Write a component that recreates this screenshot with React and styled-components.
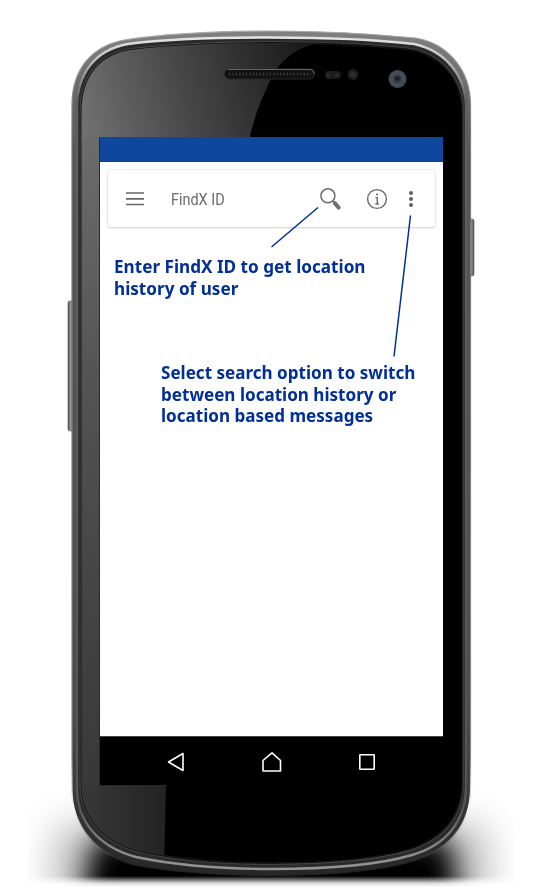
import React from 'react';
import styled, { createGlobalStyle } from 'styled-components';

const GlobalStyle = createGlobalStyle`
  * { box-sizing: border-box; }
  body { margin: 0; background: #fff; overflow: hidden; }
`;

const Page = styled.main`
  position: relative;
  width: 540px;
  height: 890px;
  padding: 137px 97px 0 100px;
  background: #fff;
  overflow: hidden;
`;

const DeviceArt = styled.svg`
  position: absolute;
  inset: 0;
  width: 540px;
  height: 890px;
`;

const Screen = styled.section`
  position: relative;
  display: flex;
  flex-direction: column;
  width: 343px;
  height: 648px;
  background: #fff;
`;

const StatusBar = styled.div`
  flex: none;
  height: 25px;
  background: #0f479f;
  border-bottom: 1px solid #0b3e96;
`;

const Content = styled.div`
  flex: 1;
  padding: 8px 8px 0;
`;

const SearchCard = styled.header`
  display: flex;
  align-items: center;
  height: 57px;
  padding: 0 22px 0 18px;
  background: #fff;
  border-radius: 2px;
  box-shadow: 0 0 2px rgba(0, 0, 0, 0.18), 0 1px 2px rgba(0, 0, 0, 0.15);
`;

const SearchLabel = styled.span`
  flex: 1;
  margin: 2px 0 0 27px;
  font: 400 16.5px/20px Roboto, sans-serif;
  color: #6a6a6a;
  white-space: nowrap;
  transform: scaleX(${(p) => p.$stretch});
  transform-origin: left;
`;

const Icon = styled.svg`
  flex: none;
  display: block;
  width: ${(p) => p.$w}px;
  height: ${(p) => p.$h}px;
  margin-left: ${(p) => p.$gap || 0}px;
  overflow: visible;
`;

const Note = styled.p`
  width: max-content;
  margin: ${(p) => p.$top}px 0 0 ${(p) => p.$left}px;
  font: 700 18px/21.5px 'Noto Sans', sans-serif;
  color: #002f98;
  white-space: pre-line;
  transform: scaleX(${(p) => p.$stretch});
  transform-origin: left;
`;

const Leaders = styled.svg`
  position: absolute;
  inset: 0;
  width: 343px;
  height: 648px;
  pointer-events: none;
`;

const NavBar = styled.nav`
  flex: none;
  display: flex;
  justify-content: space-between;
  align-items: center;
  height: 49px;
  padding: 2px 68px 0 67px;
  background: #000;
  border-top: 1px solid #444;
`;

const outer =
  'M72 105 C72 70 91 45 127 39.5 C172 33 225 31 271 31 C325 31 370 33.5 416 38 C450 44 470.5 72 470.5 105 V790 C470 825 449 849 414 861 C380 871 325 875.5 271 875.5 C217 875.5 172 872 134 865 C95 854 72 825 72 790 Z';
const middle =
  'M77 108 C77 75 94 50 128 44 C174 38 225 37.5 271 37.5 C325 37.5 370 39 414 44 C446 51 466 76 466 108 V788 C465 822 446 845 412 855 C378 865 325 869 271 869 C217 869 174 865 136 857 C99 847 77 822 77 788 Z';
const glass =
  'M81.5 112 C81.5 80 96 56 130 50 C176 44.5 225 43 271 43 C325 43 370 45 412 50 C443 57 462 81 462 112 V785 C461 817 443 838 410 849 C376 859 325 863 271 863 C217 863 176 859 139 851 C103 842 81.5 817 81.5 785 Z';

function Device() {
  return (
    <DeviceArt viewBox="0 0 540 890" aria-hidden="true">
      <defs>
        <linearGradient id="rim" x1="0" y1="31" x2="0" y2="876" gradientUnits="userSpaceOnUse">
          <stop offset="0" stopColor="#808080" />
          <stop offset=".08" stopColor="#666" />
          <stop offset=".15" stopColor="#565656" />
          <stop offset=".8" stopColor="#4c4c4c" />
          <stop offset="1" stopColor="#262626" />
        </linearGradient>
        <linearGradient id="shine" x1="0" y1="31" x2="0" y2="876" gradientUnits="userSpaceOnUse">
          <stop offset="0" stopColor="#f0f0f0" />
          <stop offset=".03" stopColor="#c4c4c4" />
          <stop offset=".08" stopColor="#606060" />
          <stop offset=".92" stopColor="#555" />
          <stop offset=".97" stopColor="#8a8a8a" />
          <stop offset="1" stopColor="#999" />
        </linearGradient>
        <linearGradient id="edge" x1="0" y1="31" x2="0" y2="876" gradientUnits="userSpaceOnUse">
          <stop offset="0" stopColor="#aaa" />
          <stop offset=".12" stopColor="#777" />
          <stop offset=".86" stopColor="#888" />
          <stop offset=".92" stopColor="#fff" />
          <stop offset=".955" stopColor="#888" />
          <stop offset=".98" stopColor="#222" />
        </linearGradient>
        <linearGradient id="glassTone" x1="80" y1="110" x2="300" y2="55" gradientUnits="userSpaceOnUse">
          <stop offset="0" stopColor="#707070" />
          <stop offset=".5" stopColor="#444" />
          <stop offset="1" stopColor="#1c1c1c" />
        </linearGradient>
        <linearGradient id="sideTone" x1="0" y1="137" x2="0" y2="787" gradientUnits="userSpaceOnUse">
          <stop offset="0" stopColor="#6c6c6c" />
          <stop offset=".4" stopColor="#525252" />
          <stop offset="1" stopColor="#383838" />
        </linearGradient>
        <linearGradient id="footTone" x1="82" y1="0" x2="166" y2="0" gradientUnits="userSpaceOnUse">
          <stop offset="0" stopColor="#383838" />
          <stop offset="1" stopColor="#232323" />
        </linearGradient>
        <linearGradient id="keyTone" x1="0" y1="0" x2="1" y2="0">
          <stop offset="0" stopColor="#444" />
          <stop offset=".4" stopColor="#999" />
          <stop offset="1" stopColor="#555" />
        </linearGradient>
        <filter id="blurShadow" x="-30%" y="-80%" width="160%" height="260%">
          <feGaussianBlur stdDeviation="13" />
        </filter>
        <filter id="blurHaze" x="-30%" y="-80%" width="160%" height="260%">
          <feGaussianBlur stdDeviation="20" />
        </filter>
        <filter id="soft">
          <feGaussianBlur stdDeviation=".6" />
        </filter>
        <linearGradient id="floorFade" x1="0" y1="876" x2="0" y2="887" gradientUnits="userSpaceOnUse">
          <stop offset="0" stopColor="#fff" stopOpacity="0" />
          <stop offset=".65" stopColor="#fff" stopOpacity=".85" />
          <stop offset="1" stopColor="#fff" />
        </linearGradient>
        <clipPath id="floor"><rect x="28" y="770" width="486" height="120" /></clipPath>
        <clipPath id="glassClip"><path d={glass} /></clipPath>
      </defs>

      <g clipPath="url(#floor)">
        <rect x="58" y="828" width="426" height="80" fill="#000" opacity=".32" filter="url(#blurHaze)" />
        <path d="M95 840 L448 840 L462 920 H80 Z" fill="#000" filter="url(#blurShadow)" />
        <rect x="0" y="875" width="540" height="15" fill="url(#floorFade)" />
      </g>

      <rect x="68" y="301" width="6" height="130" rx="2" fill="url(#keyTone)" stroke="#555" strokeWidth=".6" />
      <rect x="468.5" y="219" width="5.5" height="57" rx="2" fill="url(#keyTone)" stroke="#555" strokeWidth=".6" />

      <path d={outer} fill="url(#rim)" stroke="url(#edge)" strokeWidth="1.2" />
      <path d={middle} fill="#292929" stroke="url(#shine)" strokeWidth="2.4" filter="url(#soft)" />
      <path d={glass} fill="#000" stroke="#4a4a4a" strokeWidth="3.5" />
      <path d={glass} fill="#000" stroke="#111" strokeWidth="1.8" />
      <g clipPath="url(#glassClip)">
        <path d="M80 40 H330 C294 46 277 62 267 88 C259 104 253 122 249 140 H80 Z" fill="url(#glassTone)" />
        <rect x="80" y="137" width="20" height="650" fill="url(#sideTone)" />
        <path d="M80 785 H166 L164 870 H80 Z" fill="url(#footTone)" />
        <path d="M99.5 137 V785.5 H166" fill="none" stroke="#292929" />
      </g>

      <rect x="224.5" y="69" width="90" height="10" rx="5" fill="#111" stroke="#292929" />
      <path d="M228 69.5 H311 Q314 70 314 74" fill="none" stroke="#666" strokeWidth="1" />
      <path d="M229 74 H311" stroke="#3a3a3a" strokeWidth="3" strokeDasharray="1.2 2.2" />
      <rect x="325" y="71" width="16" height="8" rx="4" fill="#1c1c1c" />
      <circle cx="328.5" cy="75" r="2.2" fill="#282828" />
      <circle cx="337" cy="75" r="2.2" fill="#282828" />
      <circle cx="353" cy="74.5" r="5.4" fill="#1e1e1e" />
      <circle cx="353" cy="74.5" r="2.5" fill="#2d2d2d" />
      <g filter="url(#soft)">
        <circle cx="397.5" cy="79" r="9" fill="#454b57" />
        <circle cx="397.5" cy="79" r="5.2" fill="#363b46" stroke="#505764" strokeWidth="1" />
        <circle cx="397.5" cy="78.5" r="2.5" fill="#20242c" />
      </g>
    </DeviceArt>
  );
}

export default function App() {
  return (
    <>
      <GlobalStyle />
      <Page>
        <Device />
        <Screen>
          <StatusBar />
          <Content>
            <SearchCard>
              <Icon $w={18} $h={14} viewBox="0 0 18 14">
                <path d="M0 1 H18 M0 6.8 H18 M0 12.5 H18" stroke="#666" strokeWidth="1.7" />
              </Icon>
              <SearchLabel $stretch={0.875}>FindX ID</SearchLabel>
              <Icon $w={22} $h={22} viewBox="0 0 22 22">
                <circle cx="7.9" cy="7.8" r="7" fill="none" stroke="#6a6a6a" strokeWidth="1.5" />
                <path d="M12.7 12.8 L15 15.3" stroke="#6a6a6a" strokeWidth="1.6" />
                <path d="M14.8 15.2 L18.7 19.6" stroke="#707070" strokeWidth="4" strokeLinecap="round" />
              </Icon>
              <Icon $w={20} $h={20} $gap={25} viewBox="0 0 20 20">
                <circle cx="10" cy="10" r="9.4" fill="none" stroke="#6a6a6a" strokeWidth="1.4" />
                <circle cx="10" cy="5.5" r="1.1" fill="#6a6a6a" />
                <path d="M8.5 8.6 H10.3 V15 M8.4 15 H11.8" fill="none" stroke="#6a6a6a" strokeWidth="1.4" />
              </Icon>
              <Icon $w={4} $h={16} $gap={22} viewBox="0 0 4 16">
                <g fill="#616161">
                  <circle cx="2" cy="2" r="2" />
                  <circle cx="2" cy="8" r="2" />
                  <circle cx="2" cy="14" r="2" />
                </g>
              </Icon>
            </SearchCard>
            <Note $top={29} $left={6} $stretch={0.952}>
              {'Enter FindX ID to get location\nhistory of user'}
            </Note>
            <Note $top={63} $left={53} $stretch={0.948}>
              {'Select search option to switch\nbetween location history or\nlocation based messages'}
            </Note>
          </Content>
          <NavBar>
            <Icon $w={18} $h={20} viewBox="0 0 18 20">
              <path d="M16 1.5 V18.5 L1.5 10 Z" fill="none" stroke="#fff" strokeWidth="1.6" strokeLinejoin="round" />
            </Icon>
            <Icon $w={20} $h={20} viewBox="0 0 20 20">
              <path d="M1 8.5 L10 .8 L18.5 8.5 V19 H1 Z" fill="none" stroke="#fff" strokeWidth="1.6" strokeLinejoin="round" />
            </Icon>
            <Icon $w={16} $h={16} viewBox="0 0 16 16">
              <rect x=".8" y=".8" width="14.4" height="14.4" rx=".5" fill="none" stroke="#fff" strokeWidth="1.6" />
            </Icon>
          </NavBar>
          <Leaders viewBox="0 0 343 648">
            <path d="M171.5 110 L218 70.5 M310.5 78.5 L294 219.5" fill="none" stroke="#002f98" strokeWidth="1.5" />
          </Leaders>
        </Screen>
      </Page>
    </>
  );
}
